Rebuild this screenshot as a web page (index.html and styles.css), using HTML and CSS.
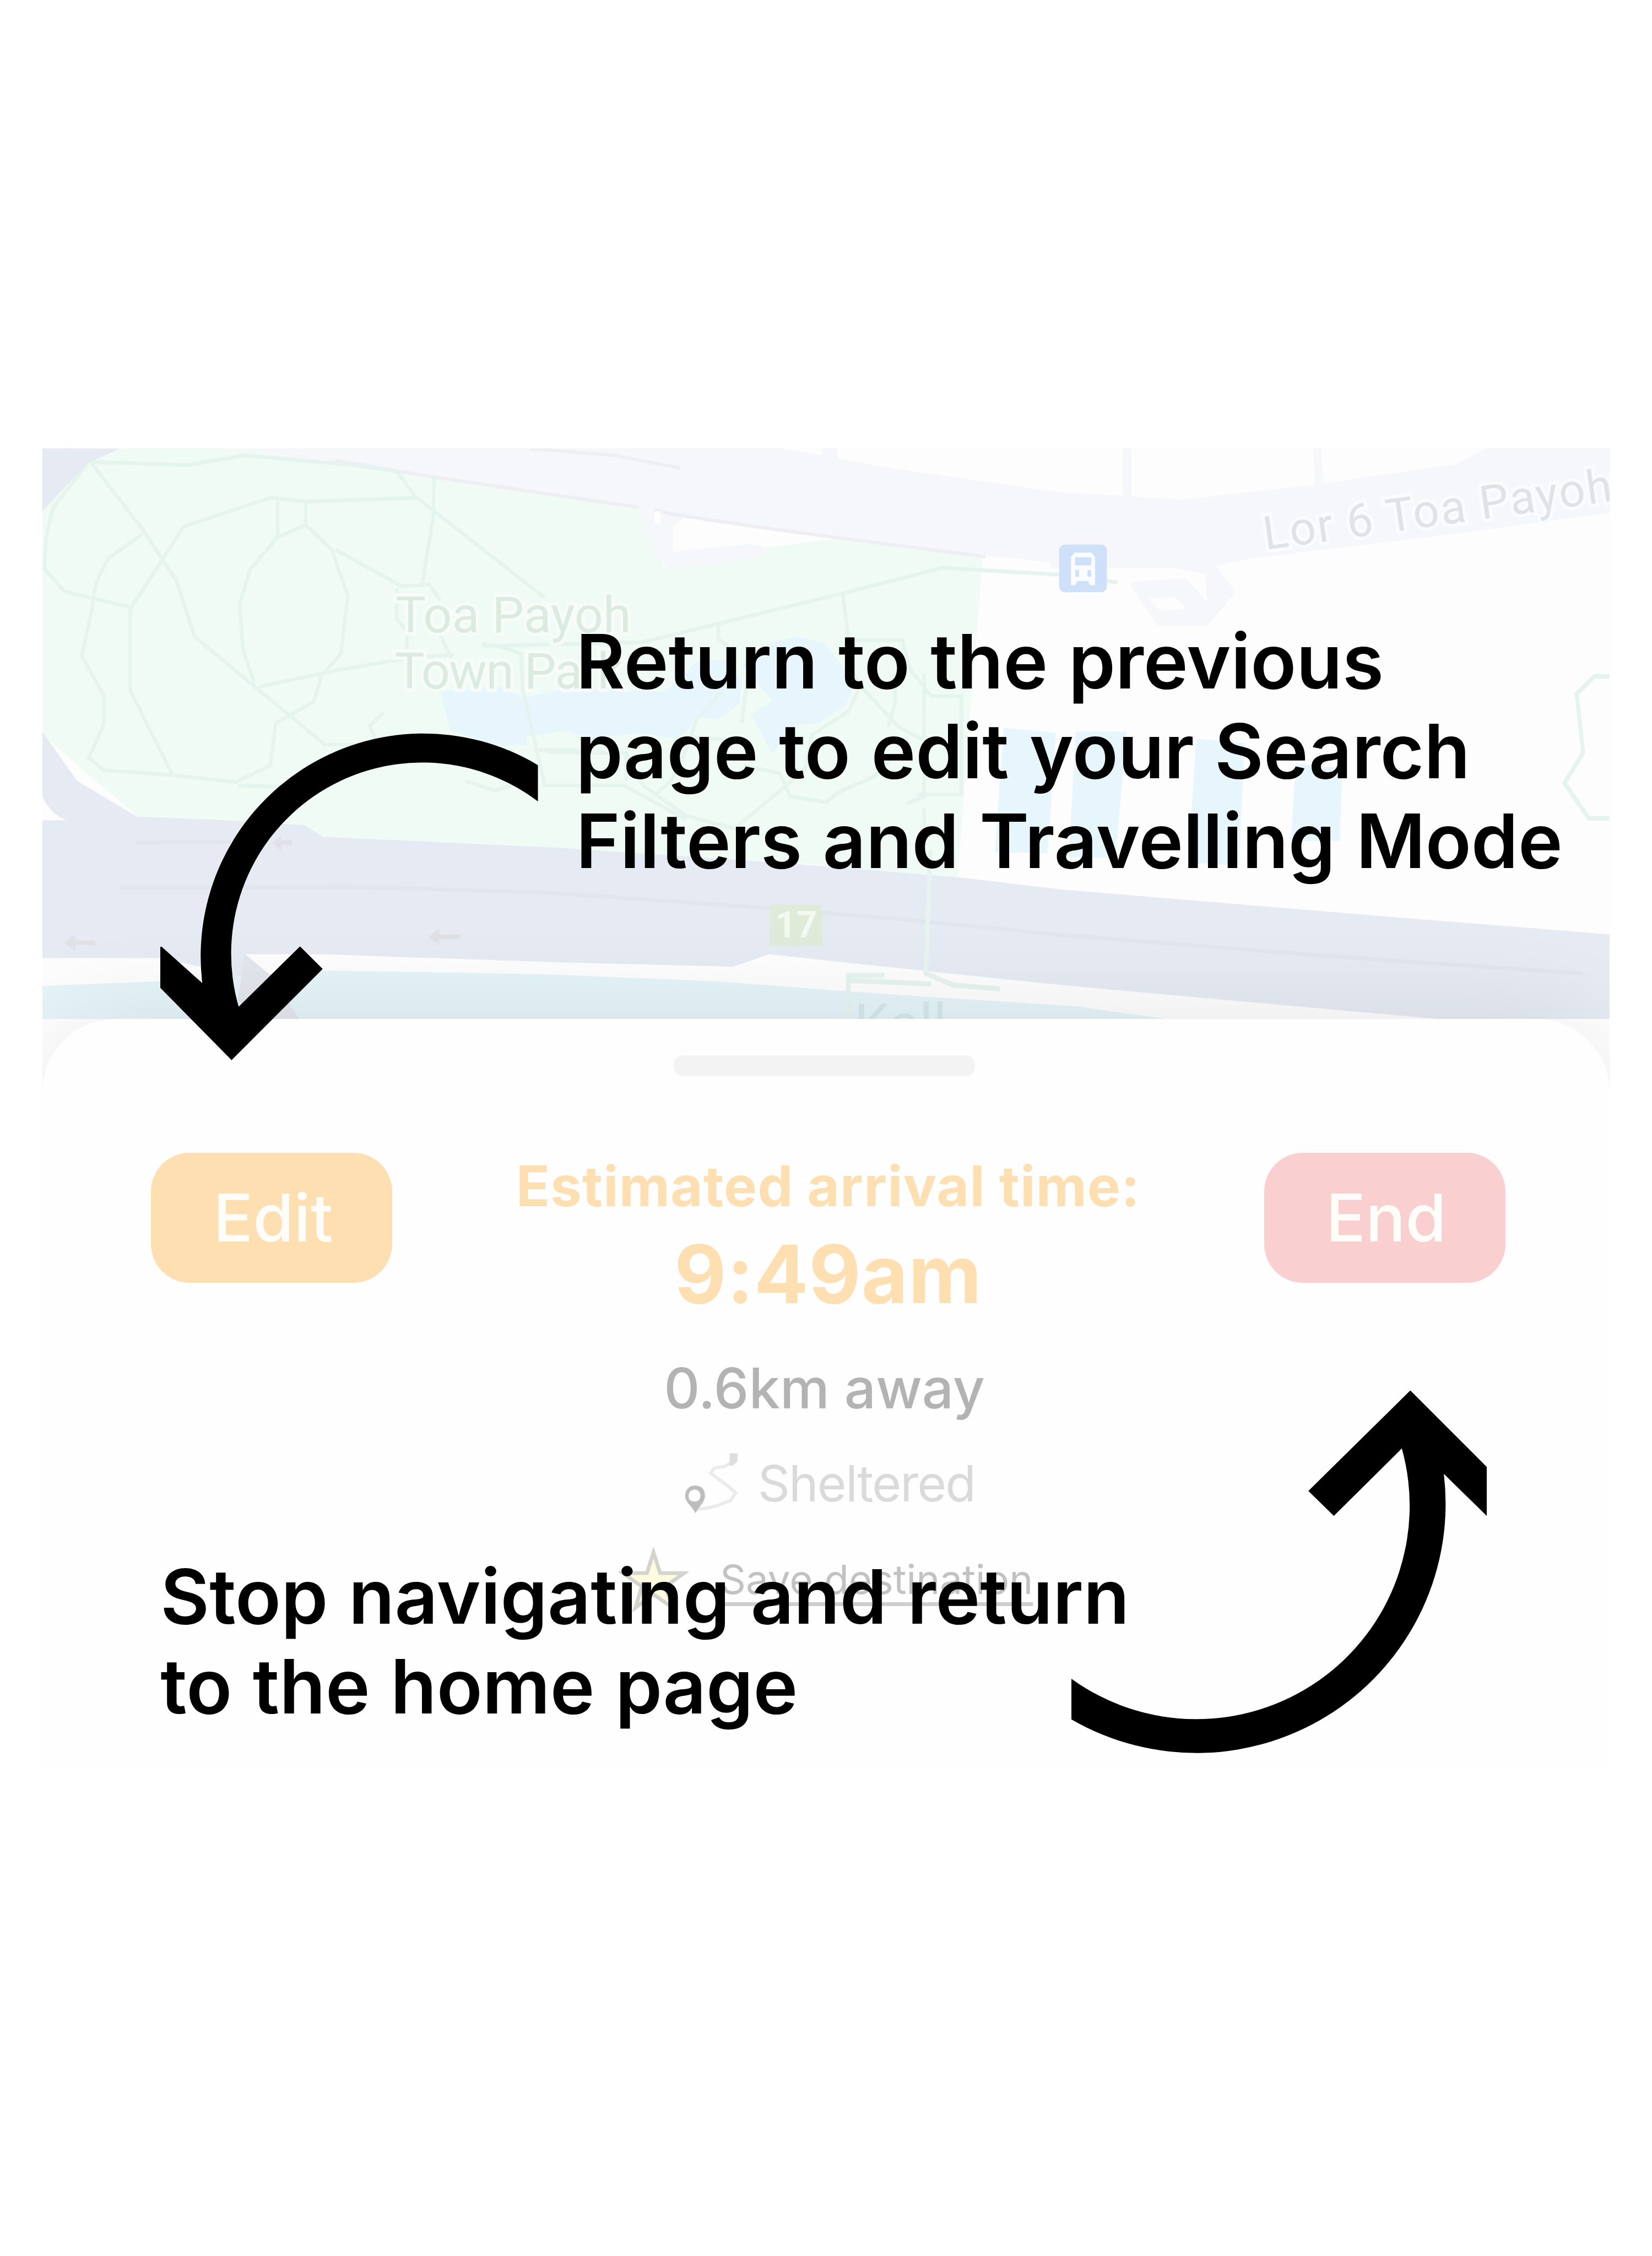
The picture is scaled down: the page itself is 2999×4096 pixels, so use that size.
FILE: index.html
```html
<!DOCTYPE html>
<html lang="en">
<head>
<meta charset="utf-8">
<title>Navigation help</title>
<link rel="stylesheet" href="styles.css">
</head>
<body>
<main class="guide">
  <section class="screen">
    <svg class="map" viewBox="90 950 3320 1209" preserveAspectRatio="none">
      <defs>
        <clipPath id="frame"><rect x="90" y="950" width="3320" height="1209"/></clipPath>
      </defs>
      <rect x="90" y="950" width="3320" height="1209" fill="#fdfdfd"/>
      <g clip-path="url(#frame)">
      <g transform="translate(60 920) scale(.7653 .8163)">
        <!-- park -->
        <path fill="#f1fbf5" d="M39 200 L165 75 L255 37 H560 L1000 95 L1437 158 L1690 192 L1760 350 L2040 295 L2240 270 L2643 316 L2605 750 L2573 1155 L2100 1110 L1437 1077 L810 1045 L760 1015 L300 990 L39 780Z"/>
        <!-- minor roads -->
        <path fill="#f6f7fa" d="M560 37 H2090 L2400 90 L2700 130 L2861 152 L3015 160 V330 L2861 335 L2650 315 L2280 272 L2020 235 L1820 212 L1785 240 V305 L1985 285 Q2045 283 2040 310 Q1980 332 1770 350 L1735 320 L1690 195 L1437 158 L1000 95Z"/>
        <path fill="#f6f7fa" d="M2195 30h45v50h-45z"/>
        <path fill="none" stroke="#eeeef3" stroke-width="9" d="M850 68 L1100 108 L1437 155 L1690 190 M1735 196 L1785 208 L2050 245 L2300 276 L2650 318 M1390 37 L1620 55 L1805 88"/>
        <path fill="#fefefe" d="M1735 200h16v32h-16z M1117 140h12v50h-12z"/>
        <!-- ponds -->
        <path fill="#e7f6fd" d="M1140 668 L1310 655 L1370 685 L1480 662 L1765 668 L1850 590 L1930 585 L1975 640 L1970 700 L1910 740 L1860 735 L1800 790 L1690 775 L1560 790 L1490 770 L1380 785 L1380 808 L1300 810 L1170 770Z M2040 545 L2130 525 L2200 540 L2290 640 L2265 700 L2190 750 L2120 755 L2060 830 L2020 760 L2000 730 L2060 690 L1975 600Z"/>
        <path fill="#e7f6fd" d="M2700 762 L2845 775 L2822 1088 L2676 1085Z M2900 772 H3040 L3010 1100 L2880 1098Z"/>
        <!-- park paths -->
        <g fill="none" stroke="#e5f4ee" stroke-width="10">
          <path d="M100 37 L175 75 L315 245 L410 380 L460 525 L620 650 L820 805 L1030 808 M175 72 L440 80 L600 55 L900 80 L1020 97 L1070 160 L1430 425"/>
          <path d="M165 75 L70 190 Q45 260 45 350 L100 408 L285 450 L370 328 L430 240 L670 165 L770 175 L1080 165 M315 260 L225 320 Q180 380 178 450 L148 575 L210 680 V750 L168 840 L210 872 L400 885 L575 903 L670 860 L685 750 L790 695 L815 620"/>
          <path d="M282 450 V665 L400 885 M690 175 V265 M768 175 V235 L690 268 L615 350 L585 440 L595 560 L625 645 M768 235 L840 300 L885 420 L865 570 L805 635 M850 300 L1035 395 L1110 390 L1140 430 M1123 110 L1122 210 L1090 390"/>
          <path d="M640 655 L860 612 L1060 580 L1180 572 M1020 400 V480 L1048 510 V570 M985 722 L945 757 L965 800 M580 912 L700 915 L850 905 M1255 545 L1305 550 L1365 570 L1368 660 L1430 912 H1650 L1820 1000 M1400 820 H1520 M1230 440 L1180 470 L1140 520 L1170 580 M1210 900 L1290 925 L1380 900"/>
          <path d="M1260 550 L1700 540 L1910 492 L2260 412 L2530 347 L2861 365 L3015 385 M1910 492 V530 L1960 570 M2255 412 L2270 535 H2420 L2440 610 L2500 680 M2270 590 L2300 650 L2410 760 L2490 800 M2300 660 L2270 720 L2170 780 L2150 870 L2050 950 L1960 1020 M2400 620 V700 L2380 760 M2500 680 H2583 V935 H2460 M2480 620 V940 L2430 960 M2480 970 V1070 M1990 640 L1975 750 M1920 670 L1850 740 L1830 800 L1780 900 L1730 940 M1840 787 L1960 795 M1980 860 L2080 880 L2110 940 L2210 955 L2240 930 L2340 890 L2400 830 M1655 830 V900 M1437 825 L1655 828 L1700 910 L1820 990 L1960 1025"/>
        </g>
        <!-- expressway -->
        <path fill="#e6eaf2" d="M39 37 H255 L165 75 L39 200Z M39 772 L135 900 L300 992 L560 1003 L765 1015 L815 1045 L1437 1072 L2050 1110 L2573 1150 L2861 1182 L3800 1255 L4400 1300 V1518 H3903 L3450 1480 L2861 1430 L2400 1385 L2050 1350 L1990 1370 L1950 1382 L1437 1370 L820 1350 H600 L660 1400 L750 1518 L600 1450 L560 1400 L370 1360 H39Z"/>
        <path fill="#fdfdfd" d="M39 940 Q60 985 105 1002 H39Z"/>
        <path fill="none" stroke="#e1e5ee" stroke-width="10" d="M300 1060 L560 1058 M250 1177 L900 1175 L1437 1190 L2050 1230 L2450 1262 L2861 1300 L3600 1355 L4300 1400"/>
        <!-- river -->
        <path fill="#e4f4f9" d="M39 1432 L370 1420 L820 1392 L1437 1402 L1900 1420 L2400 1455 L2900 1485 L3150 1518 H39Z"/>
        <path fill="#e3e6ed" d="M600 1350 L665 1400 L750 1518 H640 L580 1470Z"/>
        <g fill="#dfe1e7"><path d="M100 1320l30-22v16h55v12h-55v16z M1108 1305l30-22v16h57v12h-57v16z M675 1060l25-18v12h30v12h-30v16z"/></g>
        <path fill="none" stroke="#e6f3ef" stroke-width="13" d="M2497 1080 L2485 1400 L2560 1430 L2690 1440 M2270 1518 V1405 H2370 M2270 1418 L2500 1427"/>
      </g>
      <g transform="translate(2250 920) scale(.7972 .9247)">
        <path fill="#f6f7fa" d="M-30 133 L160 141 L320 150 L680 115 L1050 68 L1125 32 H1455 V180 L1100 222 L500 285 L410 302 L462 362 L388 438 H255 L183 350 L190 338 L330 330 L385 384 L380 320 L300 307 H-30Z"/>
        <path fill="#fdfdfd" d="M230 378 L300 372 L330 400 L260 404Z"/>
        <path stroke="#f6f7fa" stroke-width="22" d="M173 32V145M677 32L685 120"/>
        <path fill="#e7f6fd" d="M357 698 L485 708 L470 988 L335 982Z M622 755 L745 765 L738 932 L608 932Z"/>
        <path fill="none" stroke="#e5f4ee" stroke-width="11" d="M1455 555 H1415 L1368 595 L1385 730 L1335 800 L1400 880 H1455"/>
      </g>
      <!-- transit stop -->
      <rect x="2244" y="1154" width="101" height="101" rx="12" fill="#cfe0f9"/>
      <path fill="#fafcff" fill-rule="evenodd" d="M2277 1171h35l8 9v60h-10l-5-9h-22l-5 9h-9v-60z M2278 1181v16h34v-16z M2278 1208v14h8v-14z M2304 1208v14h8v-14z"/>
      <path fill="#cfe0f9" d="M2278 1188h34v10h-34z"/>
      <!-- exit number -->
      <rect x="1631" y="1917" width="111" height="87" fill="#dfead8"/>
      <text class="exit" x="1687" y="1986" text-anchor="middle">17</text>
      <text class="place" x="838" y="1340" textLength="499">Toa Payoh</text>
      <text class="place" x="836" y="1459" textLength="484">Town Park</text>
      <text class="street" transform="translate(2681 1165) rotate(-8)" textLength="745">Lor 6 Toa Payoh</text>
      <text class="river" x="1810" y="2211">Kall</text>
      </g>
    </svg>
    <div class="sheet">
      <div class="handle"></div>
      <div class="row">
        <div class="button button-edit">Edit</div>
        <div class="summary">
          <div class="eta-label">Estimated arrival time:</div>
          <div class="eta">9:49am</div>
          <div class="distance">0.6km away</div>
          <div class="sheltered">
            <svg class="route" viewBox="1444 3076 121 132">
              <path fill="none" stroke="#ebebeb" stroke-width="7" d="M1553 3096 L1535 3106 L1514 3109 L1506 3120 L1522 3132 L1546 3150 L1559 3162 L1548 3178 L1525 3187 L1500 3194 L1478 3196"/>
              <path fill="#dedede" d="M1546 3078h17v17l-10 9h-7z"/>
              <path fill="#bdbdbd" fill-rule="evenodd" d="M1473 3146c14 0 21 10 21 22 0 14-12 20-20 37-9-17-22-23-22-37 0-12 8-22 21-22z M1470 3155c-10 2-12 10-10 19 2 7 20 9 23 0 4-10-2-21-13-19z"/>
            </svg>
            <span>Sheltered</span>
          </div>
          <div class="save">
            <svg class="star" viewBox="1310 3276 148 138"><path fill="#fefbdf" stroke="#d4d4cf" stroke-width="8" d="M1384 3287 L1398 3331 L1449 3331 L1409 3359 L1424 3404 L1384 3376 L1346 3404 L1359 3359 L1319 3331 L1370 3331Z"/></svg>
            <span class="save-link">Save destination</span>
          </div>
        </div>
        <div class="button button-end">End</div>
      </div>
    </div>
  </section>

  <p class="note note-edit">Return to the previous<br>page to edit your Search<br>Filters and Travelling Mode</p>
  <p class="note note-end">Stop navigating and return<br>to the home page</p>
  <svg class="arrow arrow-edit" viewBox="340 1552 800 696"><path d="M1140 1621 A472 472 0 0 0 429 2083 L343 2006 H340 V2093 L491 2246 L684 2053 L636 2005 L506 2133 A405 405 0 0 1 1140 1698Z"/></svg>
  <svg class="arrow arrow-end" viewBox="2270 2942 880 778"><path d="M2270 3557 A452 452 0 0 0 2970 3069 L2826 3212 L2772 3159 L2988 2946 L3150 3108 V3212 L3059 3123 A528 528 0 0 1 2270 3643Z"/></svg>
</main>
</body>
</html>
```
FILE: styles.css
```css
/* 1rem is one hundred design units */
html { font-size: 85.69px; }
body { margin: 0; background: #fff; font-family: Inter, "Liberation Sans", sans-serif; }
.guide { position: relative; box-sizing: border-box; width: 35rem; height: 47.8rem; padding: 9.5rem .9rem 0; overflow: hidden; }
.screen { overflow: hidden; height: 28rem; display: flex; flex-direction: column; }
.map { display: block; flex: none; width: 33.2rem; height: 12.09rem; }
.place { font: 400 107px Roboto, sans-serif; fill: #dcebe0; stroke: #f7fcf9; stroke-width: 14px; paint-order: stroke; }
.street { font: 400 98px Roboto, sans-serif; fill: #e1e2e6; stroke: #fafbfc; stroke-width: 14px; paint-order: stroke; }
.river { font: 400 118px Roboto, sans-serif; fill: #d6e8ec; }
.exit { font: 700 77px Roboto, sans-serif; fill: #f3f8f0; }

.sheet { flex: 1; box-sizing: border-box; padding: .77rem 2.21rem 0 2.3rem; border-radius: 1.55rem 1.55rem 0 0; background: #fefefe; box-shadow: 0 0 2.2rem rgba(0, 0, 0, .09); display: flex; flex-direction: column; align-items: center; }
.handle { width: 6.38rem; height: .44rem; margin-right: .16rem; border-radius: .2rem; background: #f3f3f3; }
.row { align-self: stretch; margin-top: 1.62rem; display: flex; justify-content: space-between; align-items: flex-start; }
.button { box-sizing: border-box; width: 5.11rem; height: 2.76rem; padding-left: .06rem; border-radius: .82rem; color: #fffdfa; font-size: 1.4rem; font-weight: 500; line-height: 2.76rem; text-align: center; }
.button-edit { background: #fedfb2; }
.button-end { background: #facfd0; }
.summary { display: flex; flex-direction: column; align-items: center; white-space: nowrap; }
.eta-label { color: #fedfb2; font-size: 1.18rem; font-weight: 700; line-height: 1.42rem; letter-spacing: .013rem; }
.eta { margin-top: .13rem; color: #fedfb2; font-size: 1.7rem; font-weight: 700; line-height: 2.06rem; letter-spacing: .01rem; }
.distance { margin: .68rem .16rem 0 0; color: #b3b3b3; font-size: 1.18rem; font-weight: 500; line-height: 1.42rem; }
.sheltered { margin-top: .63rem; display: flex; align-items: center; gap: .41rem; color: #dadada; font-size: 1.06rem; line-height: 1.34rem; letter-spacing: -.022rem; }
.route { width: 1.21rem; height: 1.32rem; }
.save { margin: .68rem .1rem 0 0; display: flex; align-items: center; gap: .67rem; color: #c2c2c2; font-size: .85rem; line-height: 1.06rem; }
.star { width: 1.48rem; height: 1.38rem; }
.save-link { text-decoration: underline; text-decoration-color: #cecece; text-decoration-thickness: .08rem; text-underline-offset: .18rem; text-decoration-skip-ink: none; }

/* callouts laid over the screen */
.note { position: absolute; margin: 0; color: #000; font-size: 1.594rem; font-weight: 600; line-height: 1.902rem; word-spacing: .035rem; white-space: nowrap; }
.note-edit { left: 12.2rem; top: 13.06rem; }
.note-end { left: 3.4rem; top: 32.87rem; }
.arrow { position: absolute; fill: #000; }
.arrow-edit { left: 3.4rem; top: 15.52rem; width: 8rem; height: 6.96rem; }
.arrow-end { left: 22.7rem; top: 29.42rem; width: 8.8rem; height: 7.78rem; }
```
